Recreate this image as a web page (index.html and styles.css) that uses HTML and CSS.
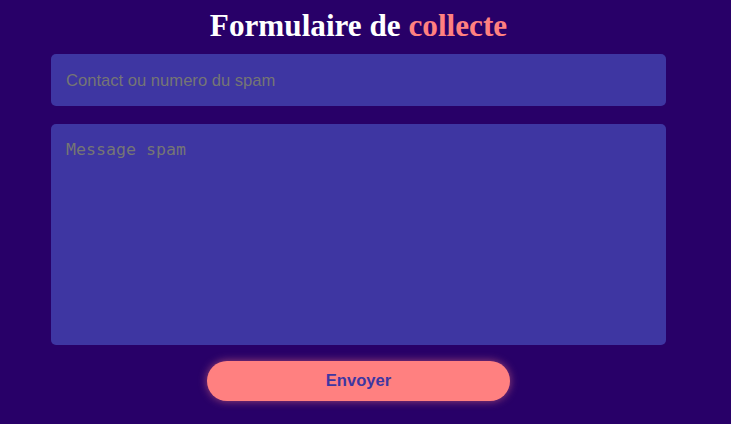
FILE: index.html
```html
<!DOCTYPE html>
<html lang="fr">
<head>
<meta charset="utf-8">
<title>Formulaire de collecte</title>
<link rel="stylesheet" href="styles.css">
</head>
<body>
<main class="page">
  <h1 class="title">Formulaire de <span class="accent">collecte</span></h1>
  <form class="form">
    <input class="field" type="text" placeholder="Contact ou numero du spam">
    <textarea class="field area" placeholder="Message spam"></textarea>
    <button class="send" type="button">Envoyer</button>
  </form>
</main>
</body>
</html>
```
FILE: styles.css
```css
html, body {
  margin: 0;
  padding: 0;
  background: #280068;
  height: 100%;
}
.page {
  width: 717px;
  display: flex;
  flex-direction: column;
  align-items: center;
}
.title {
  margin: 6px 0 0;
  font-family: "Liberation Serif", serif;
  font-weight: bold;
  font-size: 31.2px;
  line-height: 40px;
  color: #ffffff;
}
.accent { color: #ff8080; }
.form {
  width: 615px;
  display: flex;
  flex-direction: column;
  align-items: center;
  margin-top: 8px;
}
.field {
  box-sizing: border-box;
  width: 615px;
  height: 52px;
  border: none;
  border-radius: 5px;
  background: #3e36a2;
  padding: 1px 15px 0;
  font-family: "Liberation Sans", sans-serif;
  font-size: 16.6px;
  color: #ffffff;
  outline: none;
  margin: 0;
}
.field::placeholder { color: #757575; }
.area {
  display: block;
  height: 221px;
  margin-top: 18px;
  padding: 16px 15px 15px;
  resize: none;
  font-family: "DejaVu Sans Mono", monospace;
  font-size: 16.6px;
}
.send {
  margin-top: 16px;
  width: 303px;
  height: 40px;
  border: none;
  border-radius: 20px;
  background: #ff8080;
  color: #3e36a2;
  font-family: "Liberation Sans", sans-serif;
  font-weight: bold;
  font-size: 16.6px;
  box-shadow: 0 0 8px rgba(255, 128, 128, 0.55);
  cursor: pointer;
}
```
